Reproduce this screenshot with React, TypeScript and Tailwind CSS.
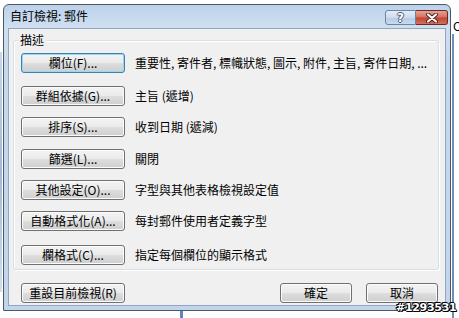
import React from 'react';

const font = { fontFamily: '"Noto Sans CJK TC", "Noto Sans CJK SC", sans-serif' };

interface Row {
  label: string;
  value: string;
  gap: string;
  isDefault?: boolean;
}

const rows: Row[] = [
  { label: '欄位(F)...', value: '重要性, 寄件者, 標幟狀態, 圖示, 附件, 主旨, 寄件日期, ...', gap: 'mt-[12px]', isDefault: true },
  { label: '群組依據(G)...', value: '主旨 (遞增)', gap: 'mt-[13px]' },
  { label: '排序(S)...', value: '收到日期 (遞減)', gap: 'mt-[11px]' },
  { label: '篩選(L)...', value: '關閉', gap: 'mt-[12px]' },
  { label: '其他設定(O)...', value: '字型與其他表格檢視設定值', gap: 'mt-[11px]' },
  { label: '自動格式化(A)...', value: '每封郵件使用者定義字型', gap: 'mt-[11px]' },
  { label: '欄格式(C)...', value: '指定每個欄位的顯示格式', gap: 'mt-[14px]' },
];

const WinButton = ({ children, width, isDefault = false }: { children: React.ReactNode; width: string; isDefault?: boolean }) => (
  <div
    className={`${width} h-[20px] shrink-0 rounded-[3px] border ${
      isDefault ? 'border-[#3c7fb1] shadow-[inset_0_0_0_1px_#9cd6f2]' : 'border-[#707070] shadow-[inset_0_0_0_1px_#fbfbfb]'
    } bg-[linear-gradient(#f3f3f3_0%,#ebebeb_48%,#dddddd_52%,#cfcfcf_100%)] flex items-center justify-center text-[12px] leading-none text-black`}
  >
    {children}
  </div>
);

export default function App() {
  return (
    <div className="relative w-[459px] h-[318px] bg-white overflow-hidden" style={font}>
      {/* bits of the window behind */}
      <div className="absolute left-0 top-[52px] w-[2px] h-[240px] bg-[linear-gradient(#c8d8ec,#9fb9d8,#d0deef)]" />
      <div className="absolute left-[452px] top-[34px] w-[2px] h-[284px] bg-[#6d8fb8]" />
      <div className="absolute left-[453px] top-[20px] text-[12px] leading-none text-black">C</div>
      <div className="absolute left-[180px] top-[311px] w-[3px] h-[7px] bg-[#5b86c6]" />

      <div className="pt-[4px] pl-[3px]">
        <div className="w-[448px] h-[307px] rounded-t-[6px] border border-[#4d5866] bg-[linear-gradient(#bcd2ea_0px,#cfdff0_22px,#c6d8ec_60px,#c2d5ea_100%)] flex flex-col">
          {/* title bar */}
          <div className="h-[23px] flex items-start shrink-0">
            <div className="pl-[6px] pt-[4px] text-[12px] leading-[14px] text-black">自訂檢視: 郵件</div>
            <div className="ml-auto mt-[5px] mr-[2px] flex">
              <div className="w-[31px] h-[15px] rounded-l-[3px] border border-[#6b84a0] bg-[linear-gradient(#e4edf7_0%,#cddcee_50%,#b7cbe3_52%,#c9daee_100%)] flex items-center justify-center">
                <span className="text-[12px] font-bold leading-none text-white [text-shadow:1px_0_0_#4a5c72,-1px_0_0_#4a5c72,0_1px_0_#4a5c72,0_-1px_0_#4a5c72]" style={{ fontFamily: '"DejaVu Sans", sans-serif' }}>?</span>
              </div>
              <div className="w-[32px] h-[15px] rounded-r-[3px] border border-l-0 border-[#6e2a22] bg-[linear-gradient(#e8a193_0%,#d5705e_48%,#c0432e_52%,#d4725c_100%)] flex items-center justify-center">
                <svg width="14" height="10" viewBox="0 0 14 10">
                  <path d="M3 1.5 L11 8.5 M11 1.5 L3 8.5" stroke="#4a1d16" strokeWidth="4" strokeLinecap="round" />
                  <path d="M3 1.5 L11 8.5 M11 1.5 L3 8.5" stroke="#ffffff" strokeWidth="2.2" strokeLinecap="round" />
                </svg>
              </div>
            </div>
          </div>

          {/* client area */}
          <div className="flex-1 mx-[4px] mb-[4px] border border-[#8fa6c0] bg-[#f0f0f0] flex flex-col px-[4px]">
            <div className="relative mt-[11px] mr-[2px] h-[230px] border border-[#d5dfe5] rounded-[3px] shadow-[inset_1px_1px_0_#ffffff,1px_1px_0_#ffffff] flex flex-col pl-[7px]">
              <div className="absolute -top-[8px] left-[4px] px-[2px] bg-[#f0f0f0] text-[12px] leading-[14px] text-black">描述</div>
              {rows.map((row) => (
                <div key={row.label} className={`${row.gap} flex items-center`}>
                  <WinButton width="w-[104px]" isDefault={row.isDefault}>{row.label}</WinButton>
                  <span className="ml-[10px] text-[12px] leading-none text-black whitespace-nowrap">{row.value}</span>
                </div>
              ))}
            </div>

            <div className="mt-[13px] flex pl-[8px] pr-[3px]">
              <WinButton width="w-[104px]">重設目前檢視(R)</WinButton>
              <div className="ml-auto flex gap-[14px]">
                <WinButton width="w-[72px]">確定</WinButton>
                <WinButton width="w-[72px]">取消</WinButton>
              </div>
            </div>
          </div>
        </div>
      </div>

      <div
        className="absolute left-[396px] top-[302px] text-[11px] font-bold leading-none text-white tracking-[-0.3px] [text-shadow:1px_0_0_#000,-1px_0_0_#000,0_1px_0_#000,0_-1px_0_#000,1px_1px_0_#000,-1px_-1px_0_#000]"
        style={{ fontFamily: '"DejaVu Sans", sans-serif' }}
      >
        #1293531
      </div>
    </div>
  );
}
